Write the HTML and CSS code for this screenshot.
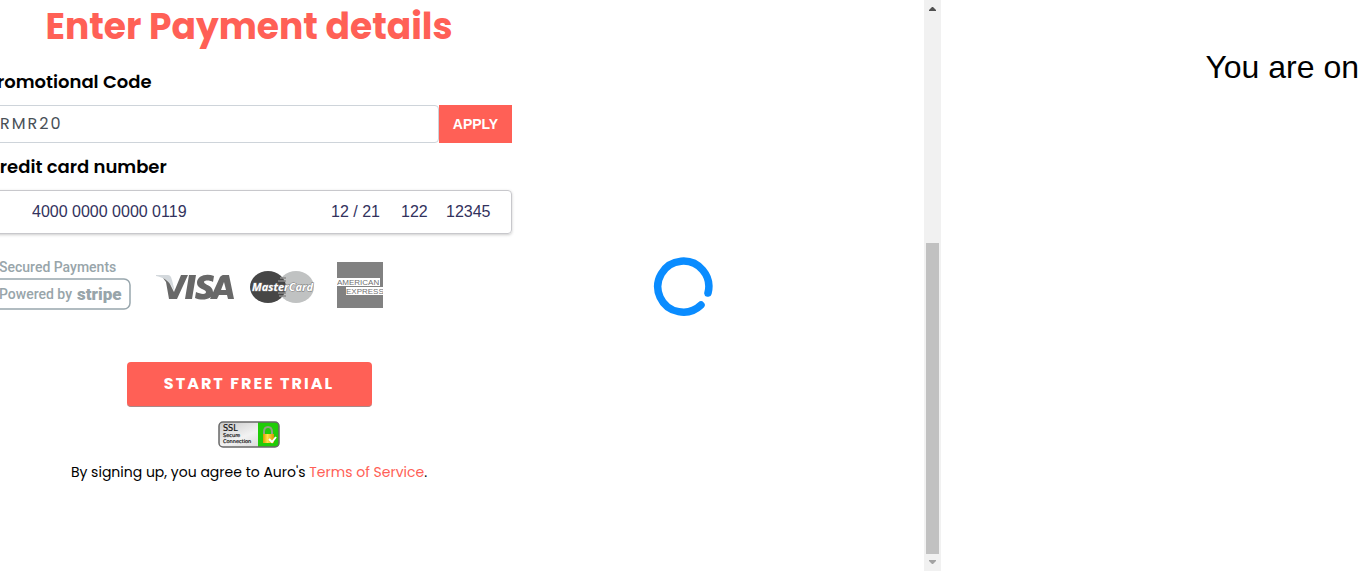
FILE: index.html
```html
<!DOCTYPE html>
<html lang="en">
<head>
<meta charset="utf-8">
<title>Enter Payment details</title>
<link rel="stylesheet" href="styles.css">
</head>
<body>
<div class="page">
  <main class="pane">
    <form class="payment">
      <h1 class="title">Enter Payment details</h1>
      <label class="label" for="promo">Promotional Code</label>
      <div class="promo">
        <input class="promo-input" id="promo" type="text" value="FRMR20">
        <button class="apply" type="button">APPLY</button>
      </div>
      <label class="label" for="card">Credit card number</label>
      <div class="card">
        <input class="card-input number" id="card" type="text" value="4000 0000 0000 0119">
        <input class="card-input expiry" type="text" value="12 / 21" aria-label="Expiry date">
        <input class="card-input cvc" type="text" value="122" aria-label="CVC">
        <input class="card-input zip" type="text" value="12345" aria-label="ZIP code">
      </div>
      <div class="brands">
        <svg class="stripe" viewBox="0 0 145 54" width="145" height="54" role="img" aria-label="Secured Payments, Powered by stripe">
          <rect x="1" y="21" width="143" height="30" rx="6" fill="#fff" stroke="#98a6ad" stroke-width="1.5"/>
          <g fill="#98a5aa" font-family="Roboto, sans-serif" font-weight="500">
            <text x="13" y="14" font-size="14">Secured Payments</text>
            <text x="13" y="41" font-size="14">Powered by</text>
            <text x="91" y="42" font-size="17" font-weight="900">stripe</text>
          </g>
        </svg>
        <svg class="visa" viewBox="0 0 80 28" width="80" height="28" role="img" aria-label="Visa">
          <path d="M0 2h11c3 0 4 1 5 5l3 12-4-7C12 7 6 4 0 3z" fill="#d3d8dc"/>
          <path d="M7 5c4 2 7 5 8 8l3 6 7-17h7L21 26h-8L10 9zM33 2h7l-4 24h-7zM58 3l-1 6c-3-2-9-2-9 0 0 3 9 3 9 10 0 8-11 9-18 6l1-6c4 2 10 3 10 0s-9-3-9-9c0-8 10-10 17-7zM67 2h6l5 24h-6l-1-4h-8l-2 4h-7L64 4c1-1 2-2 3-2zm1 7-3 8h5z" fill="#686868"/>
        </svg>
        <svg class="mastercard" viewBox="0 0 66 34" width="66" height="34" role="img" aria-label="MasterCard">
          <ellipse cx="47" cy="17" rx="18" ry="16" fill="#c0c2c2"/>
          <ellipse cx="19" cy="17" rx="18" ry="16" fill="#464646"/>
          <path d="M31 8h6M29 11h8M29 23h8M30 26h7" stroke="#8a8a8a" stroke-width="1.5"/>
          <text x="3" y="21" font-family="Open Sans, sans-serif" font-size="11" font-weight="700" font-style="italic" fill="#fff" stroke="#777" stroke-width="1" paint-order="stroke">MasterCard</text>
        </svg>
        <svg class="amex" viewBox="0 0 46 46" width="46" height="46" role="img" aria-label="American Express">
          <path d="M0 0h46v46H0z" fill="#818181"/>
          <path d="M0 16h43v8H0zM9 25h37v8H9z" fill="#fff"/>
          <g font-family="Liberation Sans, sans-serif" font-size="8" fill="#707070">
            <text x="0" y="23">AMERICAN</text>
            <text x="9" y="32">EXPRESS</text>
          </g>
        </svg>
      </div>
      <button class="start" type="submit">START FREE TRIAL</button>
      <svg class="ssl" viewBox="0 0 62 28" width="62" height="28" role="img" aria-label="SSL Secure Connection">
        <defs>
          <linearGradient id="silver" x2="1" y2="1"><stop stop-color="#c8c8c8"/><stop offset=".5" stop-color="#f2f2f2"/><stop offset="1" stop-color="#cfcfcf"/></linearGradient>
          <linearGradient id="gold"><stop stop-color="#d99a00"/><stop offset=".4" stop-color="#ffe14a"/><stop offset="1" stop-color="#d79600"/></linearGradient>
        </defs>
        <rect x="1" y="2" width="60" height="25" rx="4" fill="url(#silver)"/>
        <path d="M40 2h17q4 0 4 4v17q0 4-4 4H40z" fill="#20cc08"/>
        <rect x="1" y="2" width="60" height="25" rx="4" fill="none" stroke="#686868" stroke-width="1.5"/>
        <path d="M46 15v-3q0-5 4-5t4 5v3" fill="none" stroke="#91a082" stroke-width="2"/>
        <path d="M45 14h11v9H45z" fill="url(#gold)"/>
        <path d="m51 19 3 3 4-5" fill="none" stroke="#fff" stroke-width="2"/>
        <g font-family="DejaVu Sans, sans-serif" fill="#111" stroke="#111" stroke-width=".2">
          <text x="5" y="11" font-size="8">SSL</text>
          <text x="5" y="17" font-size="5">Secure</text>
          <text x="5" y="23" font-size="5">Connection</text>
        </g>
      </svg>
      <p class="terms">By signing up, you agree to Auro's <a class="link" href="#terms">Terms of Service</a>.</p>
    </form>
  </main>
  <div class="scrollbar" aria-hidden="true">
    <svg class="arrow" viewBox="0 0 17 17" width="17" height="17"><path d="M5 11h7v-1L9 7H8l-3 3z" fill="#505050"/></svg>
    <div class="track"><div class="thumb"></div></div>
    <svg class="arrow" viewBox="0 0 17 17" width="17" height="17"><path d="M5 6h7v1l-3 3H8L5 7z" fill="#a3a3a3"/></svg>
  </div>
  <aside class="side"><p class="notice">You are on</p></aside>
</div>
<div class="overlay" role="status" aria-label="Loading">
  <svg viewBox="0 0 60 60" width="60" height="60"><path d="M55 37A25.500 25.500 0 1 0 48 49" fill="none" stroke="#0a8cff" stroke-width="7.500" stroke-linecap="round"/></svg>
</div>
</body>
</html>
```
FILE: styles.css
```css
* {
  box-sizing: border-box;
}

body {
  margin: 0;
  background: #fff;
  color: #000;
  font-family: Poppins, Inter, sans-serif;
  overflow: hidden;
}

.page {
  display: grid;
  grid-template-columns: minmax(0, 924fr) 17px minmax(0, 425fr);
  min-height: 100vh;
}

.payment {
  display: flex;
  flex-direction: column;
  max-width: 526px;
  margin-left: -14px;
}

.title {
  margin: 0 0 14px;
  color: #ff6056;
  font-size: 36px;
  font-weight: 700;
  line-height: 54px;
  text-align: center;
}

.label {
  font-size: 18px;
  font-weight: 600;
  line-height: 28px;
}

.promo {
  display: flex;
  height: 38px;
  margin: 9px 0 10px;
}

.promo-input {
  flex: 1;
  min-width: 0;
  padding: 0 3px 2px;
  border: 1px solid #ced4da;
  border-radius: 4px;
  color: #495057;
  font: 400 16px Poppins, Inter, sans-serif;
  letter-spacing: 2px;
}

.apply {
  width: 73px;
  padding: 0;
  border: 0;
  background: #ff6056;
  color: #fff;
  font: 700 14px "Liberation Sans", Arial, sans-serif;
}

.card {
  display: flex;
  height: 44px;
  margin-top: 9px;
  padding-left: 45px;
  border: 1px solid #c8c8cc;
  border-radius: 4px;
  box-shadow: 0 1px 3px #ccc;
}

.card-input {
  min-width: 0;
  padding: 0 0 1px;
  border: 0;
  background: none;
  color: #32325d;
  font: 16px "Liberation Sans", Arial, sans-serif;
}

.number {
  flex: 1;
}

.expiry {
  width: 70px;
}

.cvc {
  width: 45px;
}

.zip {
  width: 65px;
}

.brands {
  display: flex;
  align-items: center;
  height: 58px;
  margin: 22px 0 48px;
}

.visa {
  margin: 4px 0 0 25px;
}

.mastercard {
  margin: 4px 0 0 13px;
}

.amex {
  margin-left: 22px;
}

.start {
  align-self: center;
  width: 245px;
  height: 45px;
  padding: 0 0 2px;
  border: 0;
  border-bottom: 1px solid #a88;
  border-radius: 4px;
  background: #ff6056;
  color: #fff;
  font: 700 16px Poppins, Inter, sans-serif;
  letter-spacing: 2px;
}

.ssl {
  align-self: center;
  margin-top: 13px;
}

.terms {
  margin: 12px 0 0;
  font-size: 14px;
  line-height: 24px;
  text-align: center;
}

.link {
  color: #ff6056;
  text-decoration: none;
}

.scrollbar {
  display: flex;
  flex-direction: column;
  background: #f1f1f1;
}

.arrow {
  display: block;
}

.track {
  display: flex;
  flex: 1;
  flex-direction: column;
  justify-content: flex-end;
  padding: 0 2px;
}

.thumb {
  height: 58%;
  background: #c1c1c1;
}

.notice {
  margin: 48px 7px 0 0;
  font: 32px/38px "Liberation Sans", Arial, sans-serif;
  text-align: right;
}

.overlay {
  position: fixed;
  inset: 0;
  display: grid;
  place-items: center;
  pointer-events: none;
}
```
